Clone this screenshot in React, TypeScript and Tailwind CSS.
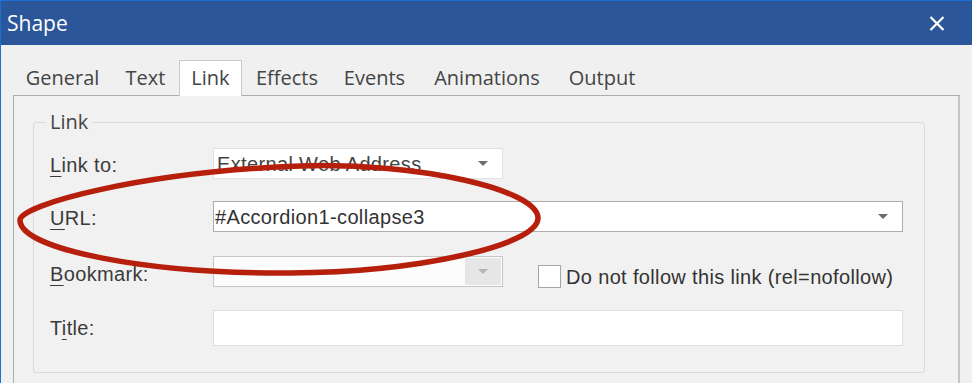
import React from 'react';

const tabs = [
  { name: 'General', w: 'w-[99px]' },
  { name: 'Text', w: 'w-[67px]' },
  { name: 'Link', w: 'w-[63px]', active: true },
  { name: 'Effects', w: 'w-[90px]' },
  { name: 'Events', w: 'w-[85px]' },
  { name: 'Animations', w: 'w-[140px]' },
  { name: 'Output', w: 'w-[90px]' },
];

function Arrow({ color = '#6d6d6d' }: { color?: string }) {
  return (
    <svg width="10" height="5" viewBox="0 0 10 5">
      <path d="M0 0 L10 0 L5 5 Z" fill={color} />
    </svg>
  );
}

function Label({ pre, key1, rest, className = '' }: { pre?: string; key1: string; rest: string; className?: string }) {
  return (
    <div
      className={`w-[163px] shrink-0 font-['Liberation_Sans',sans-serif] text-[20px] leading-none tracking-[0.35px] text-[#3b3b3b] ${className}`}
    >
      {pre}
      <span className="underline decoration-1 underline-offset-[4px]">{key1}</span>
      {rest}
    </div>
  );
}

export default function App() {
  return (
    <div className="relative h-[383px] w-[972px] overflow-hidden border-l border-t border-[#1b6fd6] bg-[#f0f0f0] font-['Open_Sans',sans-serif]">
      {/* title bar */}
      <div className="flex h-[44px] items-center justify-between bg-[#2b579a] pl-[6px] pr-[27px] text-white">
        <span className="text-[21px] leading-none">Shape</span>
        <svg width="16" height="15" viewBox="0 0 16 15">
          <path d="M1.5 1 L14.5 14 M14.5 1 L1.5 14" stroke="white" strokeWidth="2.2" />
        </svg>
      </div>

      <div className="ml-[12px] mt-[15px] flex w-[947px] flex-col">
        {/* tab strip */}
        <div className="flex h-[36px] text-[20px] text-[#444]">
          {tabs.map((t) =>
            t.active ? (
              <div
                key={t.name}
                className={`${t.w} flex items-center justify-center border-l border-r border-t border-[#c9c9c9] bg-white pb-[2px]`}
              >
                {t.name}
              </div>
            ) : (
              <div
                key={t.name}
                className={`${t.w} flex items-center justify-center border-b border-[#adadad] pb-[1px] pt-[2px]`}
              >
                {t.name}
              </div>
            )
          )}
          <div className="flex-1 border-b border-[#adadad]" />
        </div>

        {/* panel */}
        <div className="h-[300px] border-l border-r-2 border-l-[#adadad] border-r-[#c4c4c4] bg-[#f1f1f1]">
          <fieldset className="ml-[19px] mt-[14px] h-[263px] w-[892px] rounded-[3px] border border-[#dadada]">
            <legend className="ml-[12px] px-[4px] text-[20px] leading-[24px] text-[#444]">Link</legend>

            {/* Link to */}
            <div className="mt-[14px] flex h-[31px] items-center pl-[16px]">
              <Label key1="L" rest="ink to:" className="pt-[3px]" />
              <div className="flex h-[31px] w-[290px] items-center justify-between border border-[#e1e1e1] bg-white pl-[3px] pr-[14px] font-['Liberation_Sans',sans-serif] text-[20px] tracking-[0.35px] text-[#444]">
                <span>External Web Address</span>
                <Arrow />
              </div>
            </div>

            {/* URL */}
            <div className="mt-[22px] flex h-[31px] items-center pl-[16px]">
              <Label key1="U" rest="RL:" className="pt-[3px]" />
              <div className="flex h-[31px] w-[690px] items-center justify-between border border-[#adadad] bg-white pl-[1px] pr-[14px] font-['Liberation_Sans',sans-serif] text-[20px] tracking-[0.35px] text-[#333]">
                <span>#Accordion1-collapse3</span>
                <Arrow />
              </div>
            </div>

            {/* Bookmark */}
            <div className="mt-[24px] flex h-[31px] items-start pl-[16px]">
              <Label key1="B" rest="ookmark:" className="flex h-[31px] items-center pt-[4px]" />
              <div className="flex h-[31px] w-[290px] justify-end border border-[#c6c6c6] bg-[#fcfcfc] py-[1px] pr-[1px]">
                <div className="flex w-[36px] items-center justify-center bg-[#e6e6e6]">
                  <Arrow color="#b4b4b4" />
                </div>
              </div>
              <div className="ml-[35px] mt-[9px] flex h-[23px] items-center">
                <div className="h-[23px] w-[23px] border border-[#a6a6a6] bg-white" />
                <span className="ml-[5px] font-['Liberation_Sans',sans-serif] text-[20px] leading-none tracking-[0.35px] text-[#333]">
                  Do not follow this link (rel=nofollow)
                </span>
              </div>
            </div>

            {/* Title */}
            <div className="mt-[23px] flex h-[36px] items-center pl-[16px]">
              <Label pre="T" key1="i" rest="tle:" />
              <div className="h-[36px] w-[690px] border border-[#dedede] bg-white" />
            </div>
          </fieldset>
        </div>
      </div>

      {/* red annotation */}
      <svg
        className="pointer-events-none absolute left-[-1px] top-[-1px]"
        width="972"
        height="383"
        viewBox="0 0 972 383"
      >
        <path
          d="M20 220 C20 205 140 172 300 166 C420 162 538 190 538 218 C538 245 420 272 290 273 C150 274 20 250 20 220 Z"
          fill="none"
          stroke="#b61f0b"
          strokeWidth="5.5"
        />
      </svg>
    </div>
  );
}
